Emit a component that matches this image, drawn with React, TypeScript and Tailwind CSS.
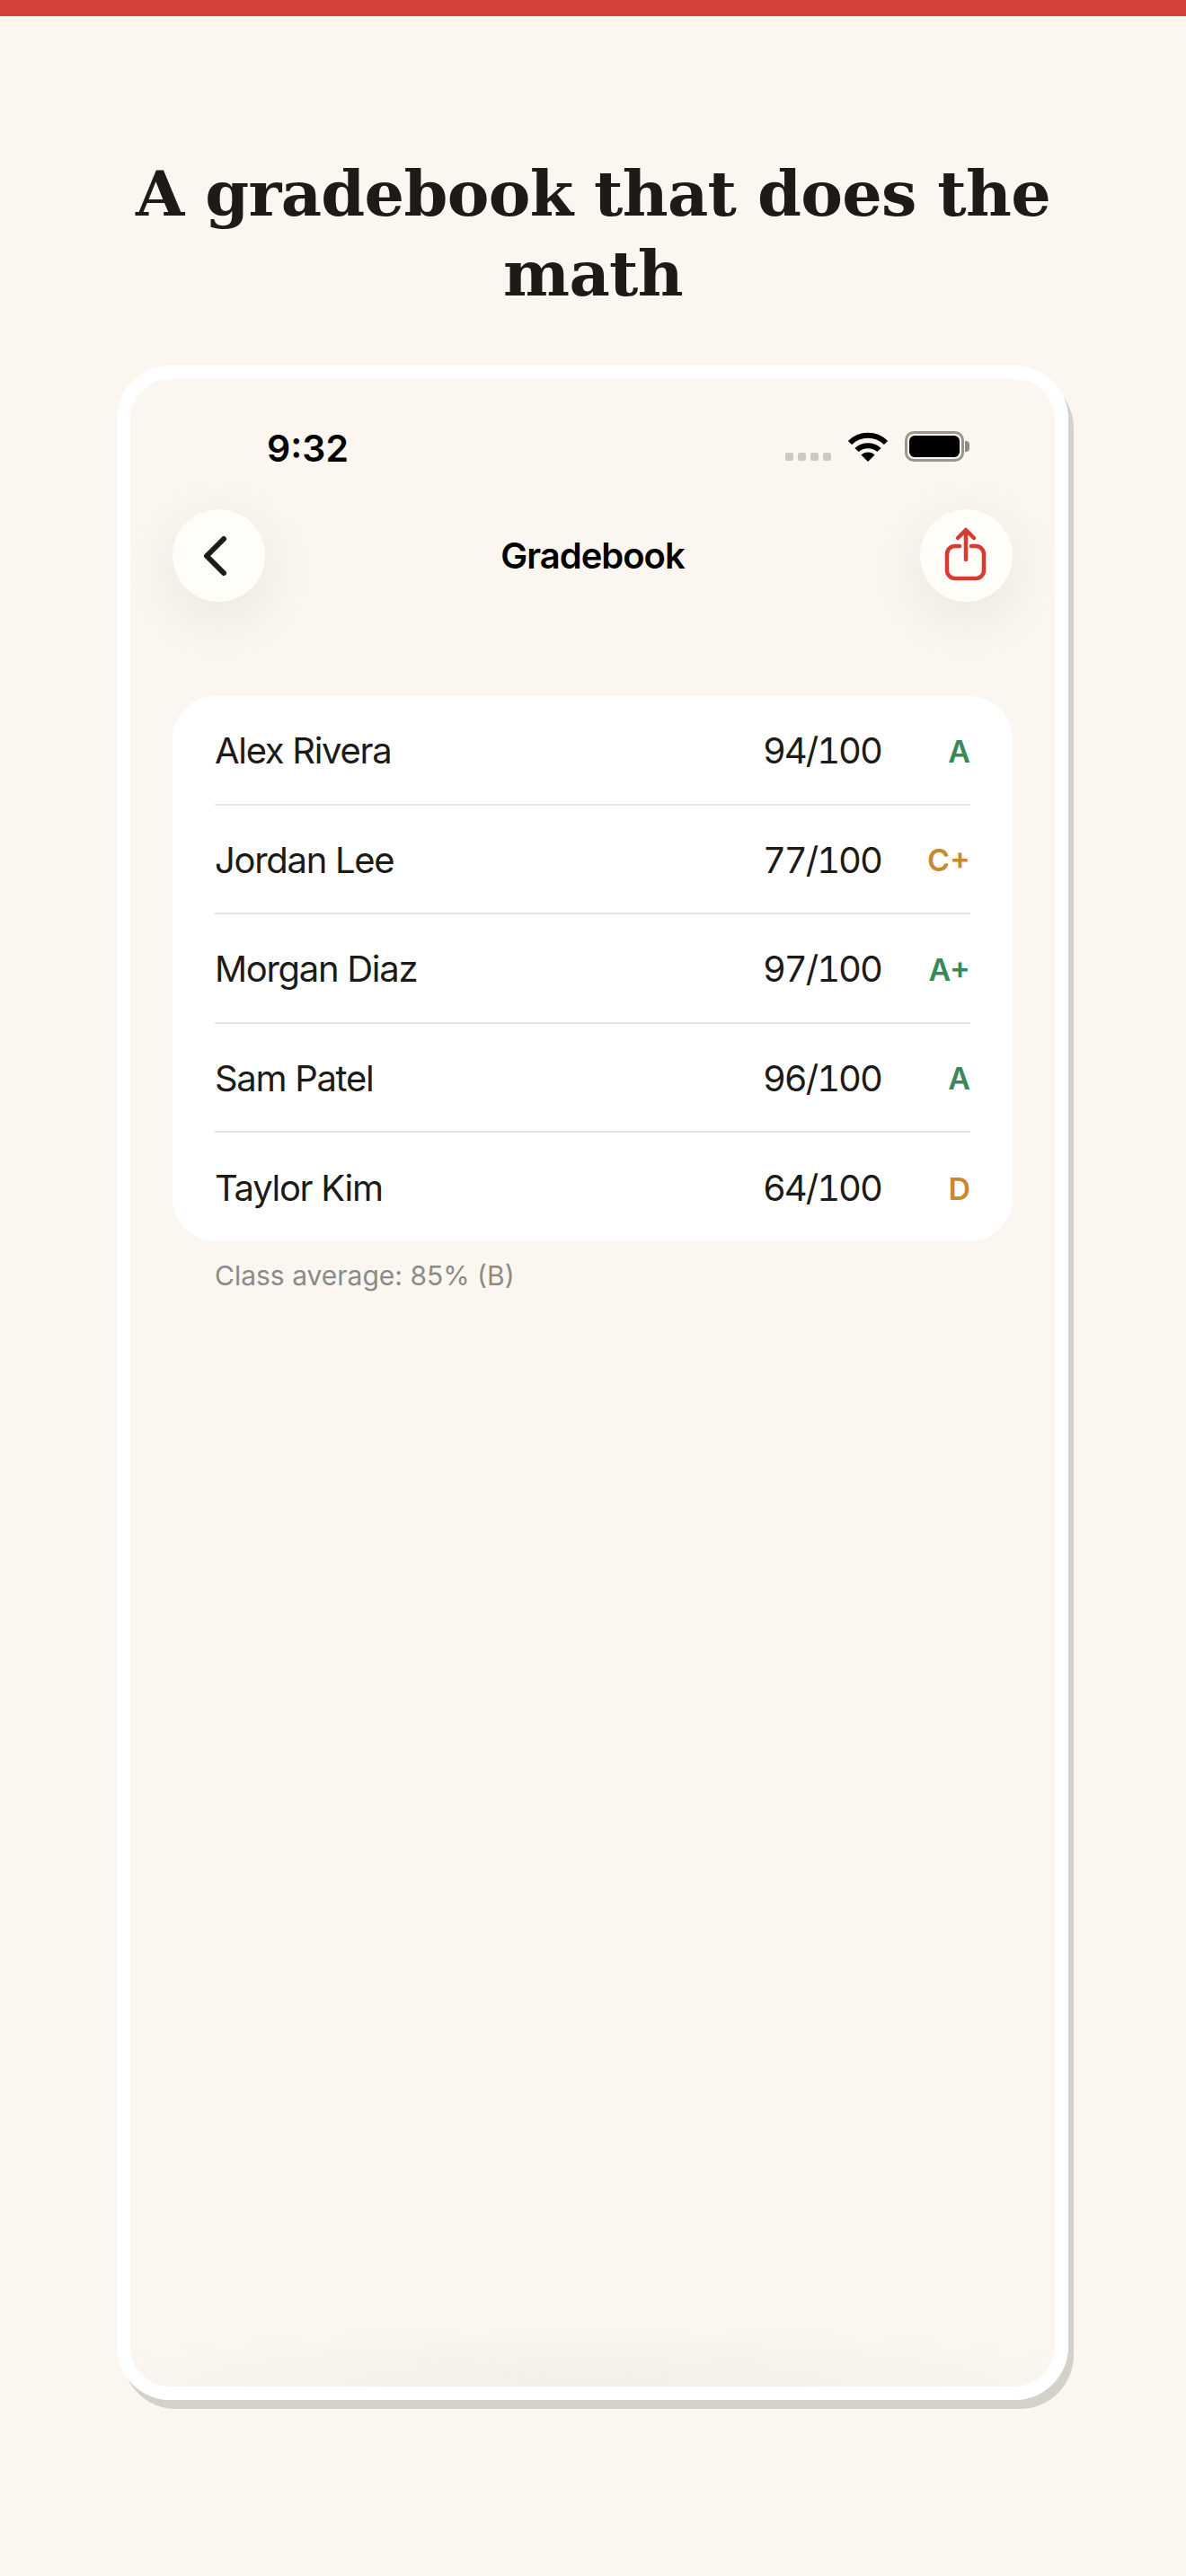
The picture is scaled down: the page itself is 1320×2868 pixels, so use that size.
const STUDENTS = [
  { name: "Alex Rivera", score: "94/100", grade: "A", tone: "text-[#38885a]" },
  { name: "Jordan Lee", score: "77/100", grade: "C+", tone: "text-[#c98a2e]" },
  { name: "Morgan Diaz", score: "97/100", grade: "A+", tone: "text-[#38885a]" },
  { name: "Sam Patel", score: "96/100", grade: "A", tone: "text-[#38885a]" },
  { name: "Taylor Kim", score: "64/100", grade: "D", tone: "text-[#c98a2e]" },
];

function WifiIcon() {
  return (
    <svg width="46" height="33" viewBox="0 0 46 33" fill="none" stroke="#000" strokeWidth="6">
      <path d="M3 12 C14 1 32 1 43 12" />
      <path d="M10.5 20 C17 13.5 29 13.5 35.5 20" />
      <path d="M23 33 L15.5 25.5 C19 21.5 27 21.5 30.5 25.5 Z" fill="#000" stroke="none" />
    </svg>
  );
}

function Battery() {
  return (
    <div className="flex items-center">
      <div className="w-[66px] h-[34px] rounded-[10px] border-[3px] border-[#9a968e] p-[2px]">
        <div className="w-full h-full rounded-[6px] bg-black" />
      </div>
      <div className="w-[5px] h-[12px] ml-[1px] rounded-r-[4px] bg-[#8f8c85]" />
    </div>
  );
}

function CircleButton({ children }: { children: React.ReactNode }) {
  return (
    <button className="w-[103px] h-[103px] rounded-full bg-[#fffdf7] shadow-[0_16px_64px_rgba(60,50,30,0.09)]">
      {children}
    </button>
  );
}

export default function App() {
  return (
    <div className="h-[2868px] overflow-hidden bg-[#fbf7f0] font-['Inter',sans-serif] text-[#1c1b18]">
      <div className="h-[18px] bg-[#d6403b]" />

      <h1 className="pt-[153px] mb-[58px] text-center font-['DejaVu_Serif',serif] font-bold text-[70px] tracking-[-0.7px] leading-[89px] px-[130px]">
        A gradebook that does the math
      </h1>

      <div className="relative ml-[130px] w-[1059px] h-[2265px] rounded-[60px] border-[15px] border-white shadow-[6px_10px_0_#d4d1ca] overflow-hidden px-[47px]">
        <div className="flex justify-between items-end h-[97px] pl-[105px] pr-[48px]">
          <span className="text-[41px] leading-[40px] font-semibold text-black">9:32</span>
          <div className="flex items-end gap-[18px] mb-[5px]">
            <div className="flex gap-[5px] mb-[1px]">
              <span className="w-[9px] h-[9px] rounded-[2px] bg-[#cdcac3]" />
              <span className="w-[9px] h-[9px] rounded-[2px] bg-[#cdcac3]" />
              <span className="w-[9px] h-[9px] rounded-[2px] bg-[#cdcac3]" />
              <span className="w-[9px] h-[9px] rounded-[2px] bg-[#cdcac3]" />
            </div>
            <WifiIcon />
            <Battery />
          </div>
        </div>

        <div className="flex items-center justify-between mt-[48px]">
          <CircleButton>
            <svg width="103" height="103" viewBox="0 0 103 103" fill="none" stroke="#1c1b18" strokeWidth="6" strokeLinecap="round" strokeLinejoin="round">
              <path d="M57 33 L38 52 L57 71" />
            </svg>
          </CircleButton>
          <span className="text-[40px] font-semibold tracking-[-1px] text-black">Gradebook</span>
          <CircleButton>
            <svg width="103" height="103" viewBox="0 0 103 103" fill="none" stroke="#d93b32" strokeWidth="4.5" strokeLinecap="round" strokeLinejoin="round">
              <path d="M44 41 H39 a9 9 0 0 0 -9 9 V68 a9 9 0 0 0 9 9 H62 a9 9 0 0 0 9 -9 V50 a9 9 0 0 0 -9 -9 H57" />
              <path d="M51 56 V23 M42 32 L51 23 L60 32" />
            </svg>
          </CircleButton>
        </div>

        <div className="mt-[105px] px-[47px] rounded-[48px] bg-white">
          {STUDENTS.map((s, i) => (
            <div
              key={s.name}
              className={
                i < STUDENTS.length - 1
                  ? "flex items-center h-[121.5px] pt-[3px] border-b-2 border-[#e4e4e2]"
                  : "flex items-center h-[121px] pt-[3px]"
              }
            >
              <span className="flex-1 text-[40px] tracking-[-1.3px] text-[#1c1b18]">{s.name}</span>
              <span className="text-[40px] tabular-nums tracking-[-2px] text-[#1c1b18]">{s.score}</span>
              <span className={`w-[99px] text-right text-[34px] font-semibold ${s.tone}`}>{s.grade}</span>
            </div>
          ))}
        </div>

        <p className="mt-[18px] pl-[47px] text-[30px] leading-[40px] text-[#8a8a88]">Class average: 85% (B)</p>

        <div className="absolute left-0 right-0 bottom-0 h-[70px] bg-[radial-gradient(ellipse_640px_70px_at_50%_100%,rgba(60,50,30,0.045),rgba(60,50,30,0))]" />
      </div>
    </div>
  );
}
